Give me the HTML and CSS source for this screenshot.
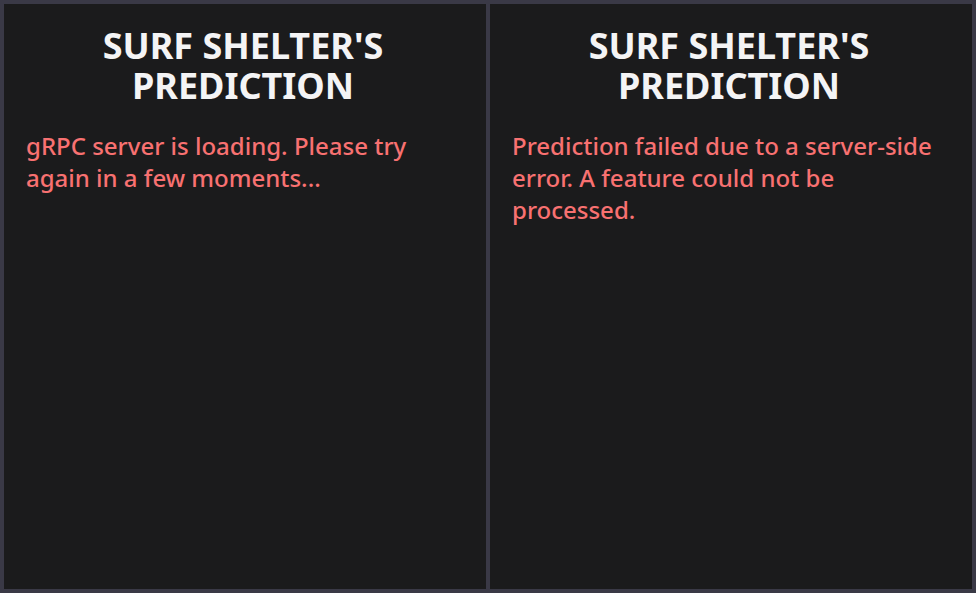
FILE: index.html
```html
<!DOCTYPE html>
<html lang="en">
<head>
<meta charset="utf-8">
<title>Surf Shelter's Prediction</title>
<link rel="stylesheet" href="styles.css">
</head>
<body>
<main class="frame">
  <section class="panel">
    <h1 class="title">Surf Shelter's Prediction</h1>
    <p class="error">gRPC server is loading. Please try again in a few moments...</p>
  </section>
  <section class="panel">
    <h1 class="title">Surf Shelter's Prediction</h1>
    <p class="error">Prediction failed due to a server-side error. A feature could not be processed.</p>
  </section>
</main>
</body>
</html>
```
FILE: styles.css
```css
* { box-sizing: border-box; }
html, body {
  margin: 0;
  padding: 0;
  height: 100%;
}
body {
  background: #3a3946;
  font-family: "Noto Sans", "Open Sans", sans-serif;
}
.frame {
  display: grid;
  grid-template-columns: 1fr 1fr;
  gap: 4px;
  padding: 4px;
  height: 593px;
}
.panel {
  background: #1b1b1c;
  padding: 22px 26px 22px 22px;
}
.title {
  margin: 0 0 24px;
  font-size: 36px;
  line-height: 40px;
  font-weight: 700;
  text-transform: uppercase;
  text-align: center;
  color: #f4f4f5;
}
.error {
  margin: 0;
  font-size: 24px;
  line-height: 32px;
  font-weight: 500;
  color: #f87171;
}
```
